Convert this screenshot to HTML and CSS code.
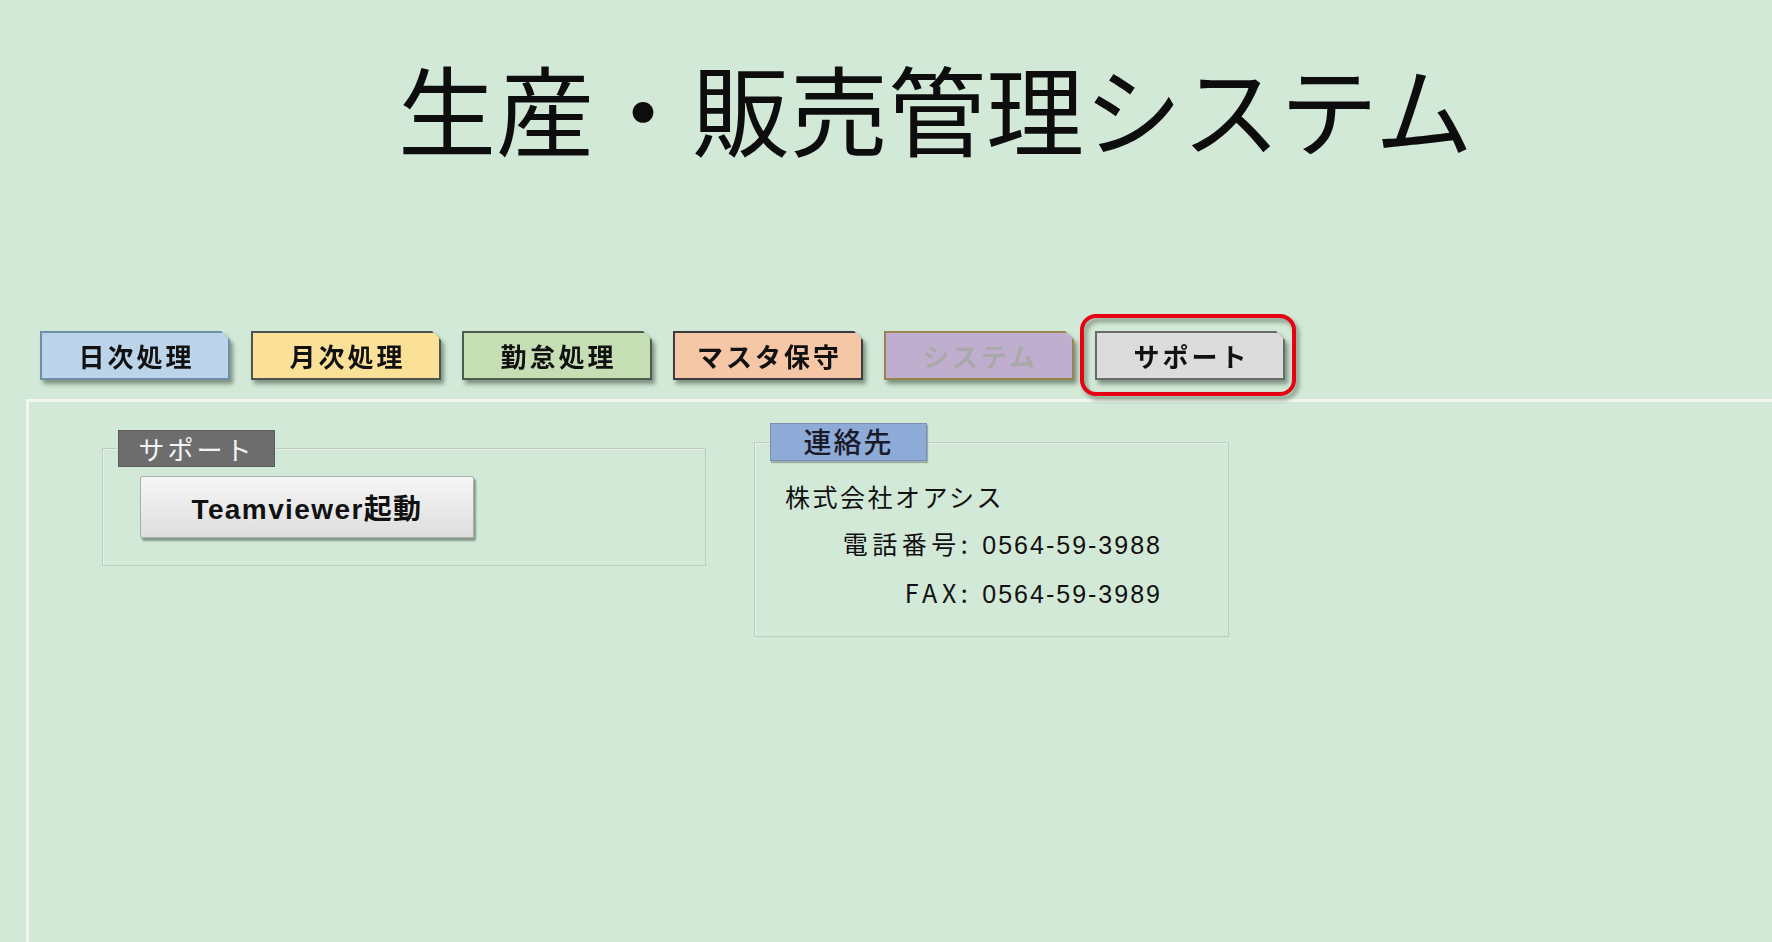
FILE: index.html
```html
<!DOCTYPE html>
<html lang="ja">
<head>
  <meta charset="utf-8">
  <title>生産・販売管理システム</title>
  <link rel="stylesheet" href="styles.css">
</head>
<body>
  <div class="app">
    <h1 class="app-title">生産・販売管理システム</h1>

    <div class="tabs">
      <div class="tab tab-daily"><span class="tab-face">日次処理</span></div>
      <div class="tab tab-monthly"><span class="tab-face">月次処理</span></div>
      <div class="tab tab-attend"><span class="tab-face">勤怠処理</span></div>
      <div class="tab tab-master"><span class="tab-face">マスタ保守</span></div>
      <div class="tab tab-system"><span class="tab-face">システム</span></div>
      <div class="tab tab-support active"><span class="tab-face">サポート</span></div>
    </div>

    <div class="panel">
      <fieldset class="group group-support">
        <legend class="group-label label-gray"><span>サポート</span></legend>
        <button type="button" class="btn">Teamviewer起動</button>
      </fieldset>

      <fieldset class="group group-contact">
        <legend class="group-label label-blue"><span>連絡先</span></legend>
        <div class="company">株式会社オアシス</div>
        <div class="contact-line">電話番号:&nbsp;<span class="num">0564-59-3988</span></div>
        <div class="contact-line">FAX:&nbsp;<span class="num">0564-59-3989</span></div>
      </fieldset>
    </div>
  </div>
</body>
</html>
```

FILE: styles.css
```css
html, body {
  margin: 0;
  height: 100%;
}

body {
  background-color: #d3e9d8;
  font-family: "Noto Sans CJK JP", "Liberation Sans", sans-serif;
  color: #111;
  overflow: hidden;
}

.app {
  display: flex;
  flex-direction: column;
  height: 100%;
}

.app-title {
  margin: 0;
  padding: 57px 0 0 398px;
  font-size: 98px;
  font-weight: 400;
  line-height: 1;
  color: #0d0d0d;
}

/* tab strip */
.tabs {
  display: flex;
  gap: 21px;
  padding-left: 40px;
  margin-top: 176px;
}

.tab {
  position: relative;
  width: 190px;
  height: 49px;
  filter: drop-shadow(3px 4px 2px rgba(40, 60, 40, 0.5));
}

.tab-face {
  display: flex;
  align-items: center;
  justify-content: center;
  box-sizing: border-box;
  width: 100%;
  height: 100%;
  padding-left: 3px;
  border: 2px solid #4a5a58;
  clip-path: polygon(0 0, calc(100% - 9px) 0, 100% 9px, 100% 100%, 0 100%);
  font-size: 26px;
  font-weight: 700;
  letter-spacing: 3px;
  color: #111;
}

.tab-daily .tab-face { background: #bcd4ea; border-color: #6f8fa8; }
.tab-monthly .tab-face { background: #fbe097; border-color: #4d5552; }
.tab-attend .tab-face { background: #c6deb3; border-color: #4d5a50; }
.tab-master .tab-face { background: #f6c7a6; border-color: #3c3c3c; }
.tab-system .tab-face { background: #bfaecd; border-color: #98844f; color: #a9a9a9; }
.tab-support .tab-face { background: #dcdcdc; border-color: #6a6a6a; }

.tab.active::after {
  content: '';
  position: absolute;
  top: -17px;
  left: -15px;
  right: -11px;
  bottom: -16px;
  border: 4px solid #e50012;
  border-radius: 16px;
}

/* content area */
.panel {
  flex: 1;
  display: flex;
  align-items: flex-start;
  gap: 48px;
  margin: 19px 0 0 26px;
  padding: 21px 0 0 73px;
  border-top: 3px solid #f3f6f0;
  border-left: 3px solid #f3f6f0;
}

.group {
  margin: 0;
  box-sizing: border-box;
  border: 1px solid #bccfbf;
  box-shadow: inset 1px 1px 0 #e8f0e8;
  min-inline-size: 0;
}

.group-label {
  padding: 0;
  width: 157px;
  height: 37px;
  box-sizing: border-box;
  text-align: left;
}

.group-label span {
  display: block;
  text-align: center;
  line-height: 35px;
}

.label-gray {
  margin-left: -22px;
  background: #6d6d6d;
  color: #f4f4f4;
  border: 1px solid #5a5a5a;
  font-size: 26px;
  letter-spacing: 3px;
}

.label-blue {
  margin-left: -15px;
  height: 38px;
  background: #8eaad7;
  color: #1a1a2a;
  border: 1px solid #7890b8;
  font-size: 28px;
  font-weight: 500;
  letter-spacing: 2px;
  box-shadow: 1px 2px 1px rgba(0, 0, 0, 0.25);
}

.group-support {
  width: 604px;
  margin-top: 7px;
  padding: 9px 0 27px 37px;
}

.group-contact {
  width: 475px;
  padding: 12px 66px 18px 30px;
  font-size: 25px;
}

.btn {
  display: block;
  width: 334px;
  height: 62px;
  border: 1px solid #a9aca9;
  border-radius: 2px;
  background: linear-gradient(#f6f6f6, #dedede);
  box-shadow: 2px 3px 2px rgba(40, 60, 40, 0.45);
  font-family: "Liberation Sans", "Noto Sans CJK JP", sans-serif;
  font-size: 28px;
  font-weight: 700;
  letter-spacing: 1.4px;
  color: #111;
}

.company {
  line-height: 47px;
  letter-spacing: 2.5px;
}

.contact-line {
  text-align: right;
  line-height: 47px;
  letter-spacing: 4.5px;
}

.num {
  font-family: "Liberation Sans", "Noto Sans CJK JP", sans-serif;
  letter-spacing: 2px;
}
```
